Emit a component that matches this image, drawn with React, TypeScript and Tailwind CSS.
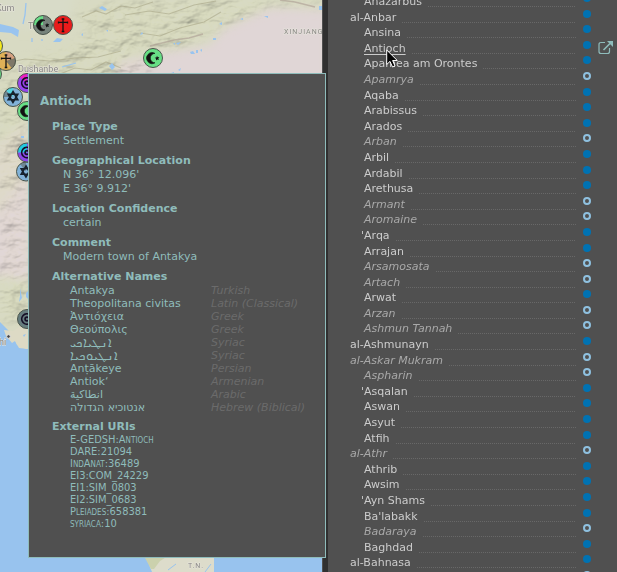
import React from "react";

type Place = { name: string; kind?: "article" | "quote"; faint?: boolean; active?: boolean };

const places: Place[] = [
  { name: "Anazarbus" },
  { name: "al-Anbar", kind: "article" },
  { name: "Ansina" },
  { name: "Antioch", active: true },
  { name: "Apamea am Orontes" },
  { name: "Apamrya", faint: true },
  { name: "Aqaba" },
  { name: "Arabissus" },
  { name: "Arados" },
  { name: "Arban", faint: true },
  { name: "Arbil" },
  { name: "Ardabil" },
  { name: "Arethusa" },
  { name: "Armant", faint: true },
  { name: "Aromaine", faint: true },
  { name: "'Arqa", kind: "quote" },
  { name: "Arrajan" },
  { name: "Arsamosata", faint: true },
  { name: "Artach", faint: true },
  { name: "Arwat" },
  { name: "Arzan", faint: true },
  { name: "Ashmun Tannah", faint: true },
  { name: "al-Ashmunayn", kind: "article" },
  { name: "al-Askar Mukram", kind: "article", faint: true },
  { name: "Aspharin", faint: true },
  { name: "'Asqalan", kind: "quote" },
  { name: "Aswan" },
  { name: "Asyut" },
  { name: "Atfih" },
  { name: "al-Athr", kind: "article", faint: true },
  { name: "Athrib" },
  { name: "Awsim" },
  { name: "'Ayn Shams", kind: "quote" },
  { name: "Ba'labakk" },
  { name: "Badaraya", faint: true },
  { name: "Baghdad" },
  { name: "al-Bahnasa", kind: "article" },
  { name: "Balad", faint: true },
];

const altNames: [string, string, string][] = [
  ["Antakya", "Turkish", "tr"],
  ["Theopolitana civitas", "Latin (Classical)", "la"],
  ["Ἀντιόχεια", "Greek", "el"],
  ["Θεούπολις", "Greek", "el"],
  ["ܐܢܛܝܐܟܝ", "Syriac", "syr"],
  ["ܐܢܛܝܘܟܝܐ", "Syriac", "syr"],
  ["Anṭākeye", "Persian", "fa-Latn"],
  ["Antiok‘", "Armenian", "hy-Latn"],
  ["انطاكية", "Arabic", "ar"],
  ["אנטוכיא הגדולה", "Hebrew (Biblical)", "he"],
];

const uris = [
  "E-GEDSH:Antioch",
  "DARE:21094",
  "IndAnat:36489",
  "EI3:COM_24229",
  "EI1:SIM_0803",
  "EI2:SIM_0683",
  "Pleiades:658381",
  "syriaca:10",
];

function Crescent() {
  return (
    <g>
      <path d="M2 -4.6A5.5 5.5 0 1 0 2 4.8A4.7 4.7 0 1 1 2 -4.6Z" fill="#111" stroke="#111" strokeWidth=".6" />
      <path d="M4 -2.2l.7 1.4 1.6-.1-1 1.3.6 1.5-1.6-.5-1.3 1 .1-1.7-1.4-.9 1.7-.4z" fill="#111" />
    </g>
  );
}

function Cross() {
  return <path d="M0 -6V6.500M-4.5 -2.6H4.5M-1.3 -6H1.3M-1.3 6.500H1.3M-4.500 -3.600v2M4.500 -3.600v2" stroke="#151515" strokeWidth="1.3" fill="none" />;
}

function Star() {
  return <path d="M0 -5.5L4.8 2.8H-4.8ZM0 5.5L-4.8 -2.8H4.8Z" stroke="#16212c" strokeWidth="1.6" fill="none" />;
}

function Ring() {
  return (
    <g fill="none" stroke="#150e26" strokeWidth="1.7">
      <path d="M3 -4.2A5.2 5.2 0 1 0 3 4.2" />
      <circle r="1.9" />
    </g>
  );
}

function Marker({ x, y, fill, wedge, children }: { x: number; y: number; fill: string; wedge?: React.ReactNode; children?: React.ReactNode }) {
  return (
    <g transform={`translate(${x} ${y})`}>
      <circle r="9.5" fill={fill} />
      {wedge}
      <circle r="9.5" fill="none" stroke="#4a554c" strokeWidth="1" />
      {children}
    </g>
  );
}

function MapView() {
  return (
    <svg viewBox="0 0 322 572" preserveAspectRatio="xMinYMin slice" className="absolute inset-0 h-full w-full" role="img" aria-label="Map">
      <defs>
        <filter id="relief" x="0" y="0" width="100%" height="100%">
          <feTurbulence type="fractalNoise" baseFrequency="0.04 0.07" numOctaves="4" seed="8" />
          <feDiffuseLighting surfaceScale="6" lightingColor="#fffff0" diffuseConstant="1.15">
            <feDistantLight azimuth="235" elevation="58" />
          </feDiffuseLighting>
        </filter>
        <filter id="soft" x="-10%" y="-10%" width="120%" height="120%">
          <feGaussianBlur stdDeviation="5" />
        </filter>
        <mask id="hills">
          <path filter="url(#soft)" fill="#fff" d="M75 14L120 0H330V4L270 6 225 26 180 48 130 52 160 82H20L28 150V320H0V85L25 60 60 50 90 36Z" />
        </mask>
      </defs>
      <rect width="322" height="572" fill="#d8dac3" />
      <g filter="url(#soft)">
        <path d="M0 -10H75L68 20 25 30 0 26Z" fill="#d8dbc8" />
        <path d="M110 82L120 62 165 52 210 45 225 28 270 8 330 10V90H110Z" fill="#e0d6d6" />
        <path d="M-10 150L28 120V180L10 220 -10 230Z" fill="#ded9cb" />
        <path d="M-10 225L30 170V280L-10 275Z" fill="#e1d7d7" />
      </g>
      <rect width="322" height="345" filter="url(#relief)" mask="url(#hills)" opacity=".42" style={{ mixBlendMode: "multiply" }} />
      <g fill="none" stroke="#a5a283" strokeWidth="1.2" opacity=".55">
        <path d="M82 17l14-6 10 3 15-8 14 2 18-6M125 15l24-4 20 3 25-9 22-4M140 33l20 3 20-8 24-6 17-10" />
        <path d="M0 64l25-5 25 2 25-3 23-1 23-6M55 76l20-8 16 2 15-8 15 6" />
      </g>
      <path d="M150 46l24-6 15-2 14-4M280 0l15 2 20 5" fill="none" stroke="#aa9b91" strokeWidth="1.5" opacity=".6" />
      <g fill="#99c4ef">
        <path d="M0 24l13 3 6 3-1 7-7-4-11-1Z" />
        <path d="M53 42l4-4 6 1-3 3ZM99 8l3-2 5 3-2 2ZM81 35l2-2v3ZM140 35l2-3 1 2ZM176 43l5-1-3 3ZM190 52l3-1 2 3-4 0ZM196 50h2v3h-2ZM200 50l2-1v3ZM213 38h3v2h-3ZM219 24l3-2v3ZM240 19l3-1v2ZM264 16h4v2ZM319 6h3v4h-3ZM109 66l3-3 3 4-3 3ZM171 73l3-1v1ZM178 70l3-2-1 3ZM173 43h2v2ZM106 30h2v2Z" />
        <path d="M32 38v4M42 39v2M26 3l-1 12 -2 9M62 67l14-4" fill="none" stroke="#99c4ef" strokeWidth="1.3" />
        <path d="M21 136h3v2h-3ZM20 288l2 10-3 4 1-6ZM26 293l2-2v8l-2-2Z" />
      </g>
      <path d="M0 322L8 330 13 336 17 345 26 349 28 349V572H0Z" fill="#98c3ee" />
      <path d="M4 330l9 1 15-10V349l-9-1-4-7-3 2-6-7Z" fill="#dddac5" />
      <path d="M23 335l3-1-2 3Z" fill="#98c3ee" />
      <rect y="555" width="322" height="17" fill="#98c3ee" />
      <path d="M144 555l4 7 4 10H214V555Z" fill="#dddccb" />
      <path d="M144 556h24l-8 5-6 8h-3Z" fill="#cbd1ad" />
      <path d="M168 570l8-6M205 572l6-8" stroke="#98c3ee" strokeWidth="1" />
      <g fontFamily="'Roboto','Open Sans',sans-serif" fill="#8b8986" stroke="#e6e4dc" strokeWidth="1" paintOrder="stroke">
        <text x="-4" y="11" fontSize="9">Kum</text>
        <text x="28" y="29" fontSize="9">Ta</text>
        <text x="18" y="72" fontSize="9">Dushanbe</text>
        <text x="284" y="34" fontSize="7" letterSpacing="1">XINJIANG</text>
        <text x="-1" y="345" fontSize="9">hi</text>
        <text x="188" y="568" fontSize="7" letterSpacing="1">T.N.</text>
      </g>
      <circle cx="8.500" cy="336.500" r="1.800" fill="#444" stroke="#ddd" />
      <Marker x={-7} y={46} fill="#f5e91c" />
      <Marker x={-8} y={74} fill="#67d681" />
      <Marker x={43} y={25} fill="#77837b" wedge={<path d="M0 0L-9.500 0A9.500 9.500 0 0 1 0 -9.500Z" fill="#69dc87" />}><Crescent /></Marker>
      <Marker x={63} y={25} fill="#e91b1b"><Cross /></Marker>
      <Marker x={6} y={61} fill="#dfb057" wedge={<><path d="M0 0V-9.500A9.500 9.500 0 0 1 9 -3Z" fill="#d4a080" /><path d="M0 0L9 -3A9.500 9.500 0 0 1 6 7.500Z" fill="#7d7768" /></>}><Cross /></Marker>
      <Marker x={153} y={58} fill="#67df85"><Crescent /></Marker>
      <Marker x={27} y={83} fill="#9745ec" wedge={<path d="M0 0L-7 -6A9.500 9.500 0 0 1 0 -9.500Z" fill="#ed1ec0" />}><Ring /></Marker>
      <Marker x={27} y={111} fill="#67df85"><Crescent /></Marker>
      <Marker x={13} y={97} fill="#81b2d8" wedge={<><path d="M0 0L-9.500 0A9.500 9.500 0 0 1 -7 -6.400Z" fill="#6f8791" /><path d="M0 0L-7 -6.400A9.500 9.500 0 0 1 0 -9.500Z" fill="#55d3df" /></>}><Star /></Marker>
      <Marker x={26} y={171.500} fill="#81b2d8" wedge={<path d="M0 0L-6 -7.400A9.500 9.500 0 0 1 0 -9.500Z" fill="#6f8791" />}><Star /></Marker>
      <Marker x={27} y={152.500} fill="#8d46e8" wedge={<path d="M0 0L-9.500 0A9.500 9.500 0 0 1 0 -9.500Z" fill="#22c9df" />}><Ring /></Marker>
      <Marker x={27} y={319} fill="#667d7e"><Ring /></Marker>
    </svg>
  );
}

function Section({ title, children }: { title: string; children: React.ReactNode }) {
  return (
    <section className="pl-3 text-[11px] leading-[14px]">
      <h3 className="text-[11px] font-bold leading-[14px]">{title}</h3>
      {children}
    </section>
  );
}

function PlacePopup() {
  return (
    <article className="absolute left-7 top-[73px] z-10 w-[298px] border border-[#8fbcbb] bg-[#505050] pb-[27px] pl-[11px] pt-5 text-[#8fbcbb]">
      <h2 className="text-[12px] font-bold leading-[14px]">Antioch</h2>
      <div className="flex flex-col gap-1.5 pt-3">
        <Section title="Place Type">
          <p className="pl-[11px]">Settlement</p>
        </Section>
        <Section title="Geographical Location">
          <p className="pl-[11px]">N 36° 12.096'</p>
          <p className="pl-[11px]">E 36° 9.912'</p>
        </Section>
        <Section title="Location Confidence">
          <p className="pl-[11px]">certain</p>
        </Section>
        <Section title="Comment">
          <p className="pl-[11px]">Modern town of Antakya</p>
        </Section>
        <Section title="Alternative Names">
          <table className="ml-[18px] border-collapse leading-[13px]">
            <tbody>
              {altNames.map(([name, language, lang], i) => (
                <tr key={i} className="h-[13px]">
                  <td className={`w-[141px] whitespace-nowrap p-0 ${lang === "syr" ? "text-[13px]" : ""}`} lang={lang}>{name}</td>
                  <td className="whitespace-nowrap p-0 italic text-[#6b6b6b]">{language}</td>
                </tr>
              ))}
            </tbody>
          </table>
        </Section>
        <Section title="External URIs">
          <ul className="pl-[18px] text-[11px] leading-[12px] [font-family:'DejaVu_Sans_Condensed','DejaVu_Sans',sans-serif] [font-variant-caps:small-caps]">
            {uris.map((uri) => (
              <li key={uri}>{uri}</li>
            ))}
          </ul>
        </Section>
      </div>
    </article>
  );
}

function PlaceRow({ place }: { place: Place }) {
  const indent = place.kind === "article" ? "pl-[22px]" : place.kind === "quote" ? "pl-[33px]" : "pl-9";
  return (
    <li className={`flex h-[1.2em] items-start text-[13px] ${indent}`}>
      <a
        href="#place"
        className={`text-[11px] leading-[16px] ${place.faint ? "italic text-[#a9a9a9]" : "text-[#cccccc]"} ${place.active ? "cursor-pointer underline underline-offset-2" : ""}`}
      >
        {place.name}
      </a>
      <span className="ml-1.5 mt-3 h-px flex-1 bg-[repeating-linear-gradient(90deg,#686868_0_1px,transparent_1px_2px)]" />
      <span
        className={`ml-[7px] size-2 rounded-full ${place.faint ? "border-2 border-[#8fc1e0]" : "bg-[#0072b2]"}`}
      />
      <span className="flex w-[26px] justify-end pr-1">
        {place.active && (
          <button type="button" aria-label="Open Antioch" className="h-3.5 w-4 text-[#8fbcbb]">
            <svg viewBox="0 0 16 14" className="size-full overflow-visible" fill="none" stroke="currentColor" strokeWidth="1.2">
              <path d="M8 1.500H4Q2 1.500 2 3.500V10.500Q2 12.500 4 12.500H10.500Q12.500 12.500 12.500 10.500V7" />
              <path d="M6.500 9L13 2.500" strokeWidth="1.600" />
              <path d="M10 0H16V6Z" fill="currentColor" stroke="none" />
            </svg>
          </button>
        )}
      </span>
    </li>
  );
}

export default function App() {
  return (
    <div className="relative flex h-screen overflow-hidden bg-[#505050] [font-family:'DejaVu_Sans',sans-serif]">
      <main className="relative min-w-0 flex-1 overflow-hidden">
        <MapView />
      </main>
      <div className="w-1.5 border-l border-[#505050] bg-[#303030]" />
      <aside className="relative w-[289px] overflow-hidden">
        <ul className="-mt-1.5">
          {places.map((place) => (
            <PlaceRow key={place.name} place={place} />
          ))}
        </ul>
        <svg viewBox="0 0 12 19" className="absolute left-[58px] top-[49px] h-[19px] w-3" aria-hidden="true">
          <path d="M.7 1V15.500L4 12.400 6.500 18 9 17 6.600 11.500H11.300Z" fill="#050505" stroke="#fff" strokeWidth="1" />
        </svg>
      </aside>
      <PlacePopup />
    </div>
  );
}
